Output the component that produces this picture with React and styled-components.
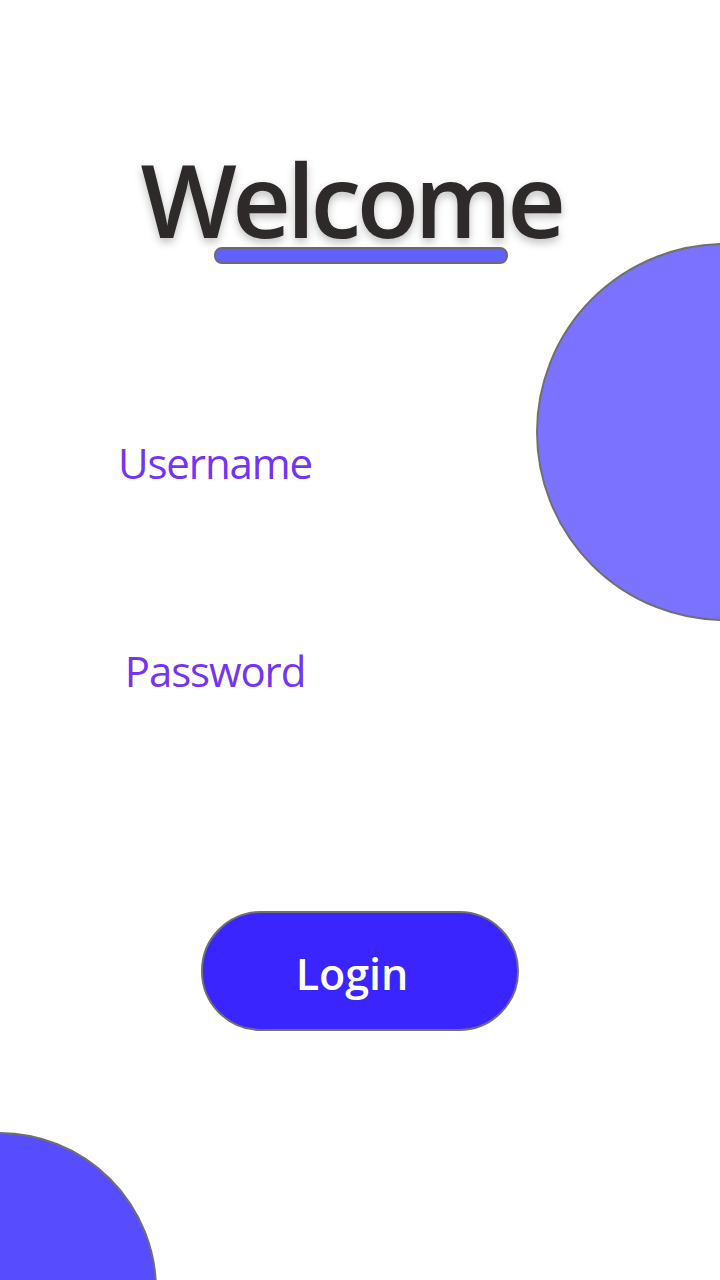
import React from "react";
import styled, { createGlobalStyle } from "styled-components";

const Global = createGlobalStyle`
  html, body { margin: 0; padding: 0; background: #ffffff; }
  body { font-family: "Open Sans", "Noto Sans", sans-serif; }
  * { box-sizing: border-box; }
`;

const Page = styled.div`
  position: relative;
  width: 720px;
  height: 1280px;
  overflow: hidden;
  background: #ffffff;
  display: flex;
  flex-direction: column;
  align-items: center;
`;

const Blob = styled.div`
  position: absolute;
  border-radius: 50%;
  border: 2px solid #707070;
  background: ${(p) => p.$color};
  width: ${(p) => p.$size}px;
  height: ${(p) => p.$size}px;
  left: ${(p) => p.$left}px;
  top: ${(p) => p.$top}px;
`;

const Header = styled.header`
  display: flex;
  flex-direction: column;
  align-items: center;
  padding-top: 148px;
`;

const Title = styled.h1`
  margin: 0 18px 0 0;
  font-family: "Open Sans", "Noto Sans", sans-serif;
  font-weight: 600;
  font-size: 102px;
  line-height: 102px;
  letter-spacing: -4.5px;
  color: #2e2a2a;
  text-shadow: 0 4px 8px rgba(0, 0, 0, 0.25);
`;

const Underline = styled.div`
  width: 294px;
  height: 17px;
  margin-top: -3px;
  margin-left: 2px;
  border-radius: 8px;
  border: 2px solid #6b6b6b;
  background: #6060ff;
`;

const Form = styled.form`
  position: relative;
  z-index: 1;
  align-self: stretch;
  display: flex;
  flex-direction: column;
  align-items: flex-start;
  padding-left: 95px;
  margin-top: 171px;
`;

const Field = styled.label`
  width: 240px;
  height: 208px;
  display: flex;
  justify-content: center;
  font-family: "Open Sans", "Noto Sans", sans-serif;
  font-weight: 400;
  font-size: 42px;
  line-height: 56px;
  letter-spacing: -1.1px;
  color: #7434f4;
`;

const ButtonRow = styled.div`
  display: flex;
  justify-content: center;
  margin-top: 60px;
  position: relative;
  z-index: 1;
`;

const LoginButton = styled.button`
  width: 318px;
  height: 120px;
  border-radius: 60px;
  border: 2px solid #707070;
  background: #3a24ff;
  color: #ffffff;
  font-family: "Open Sans", "Noto Sans", sans-serif;
  font-weight: 600;
  font-size: 43px;
  padding: 4px 16px 0 0;
  cursor: pointer;
`;

export default function App() {
  return (
    <>
      <Global />
      <Page>
        <Blob $color="#7b73ff" $size={378} $left={536} $top={243} />
        <Blob $color="#584cff" $size={316} $left={-159} $top={1132} />
        <Header>
          <Title>Welcome</Title>
          <Underline />
        </Header>
        <Form onSubmit={(e) => e.preventDefault()}>
          <Field>Username</Field>
          <Field>Password</Field>
        </Form>
        <ButtonRow>
          <LoginButton type="submit">Login</LoginButton>
        </ButtonRow>
      </Page>
    </>
  );
}
